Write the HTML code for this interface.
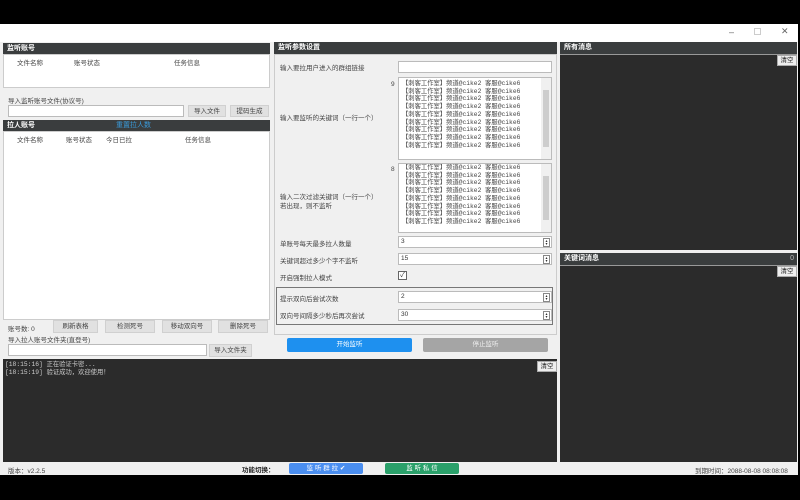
<!DOCTYPE html>
<html><head><meta charset="utf-8"><style>
*{margin:0;padding:0;box-sizing:border-box}
body{width:800px;height:500px;background:#000;position:relative;overflow:hidden;font-family:"Liberation Sans","Noto Sans CJK SC",sans-serif;font-size:7px;color:#333}
.a{position:absolute}
.hd{position:absolute;background:#3a3d3e;color:#fff;font-size:7px;line-height:11px;padding-left:4px;font-weight:bold}
.wh{position:absolute;background:#fff}
.inp{position:absolute;background:#fff;border:1px solid #bbb;font-size:6.5px;line-height:10px;padding-left:2px}
.btn{position:absolute;background:#e1e1e1;border:1px solid #d0d0d0;text-align:center;font-size:6.5px;line-height:11px;color:#444}
.dk{position:absolute;background:#2b2b2b}
.clr{position:absolute;background:#eee;border:1px solid #aaa;font-size:6.5px;line-height:9px;text-align:center;width:20px;height:11px;color:#222}
.ta{position:absolute;background:#fff;border:1px solid #bbb;font-size:6.3px;line-height:7.7px;padding:2px 0 0 3px;white-space:pre;color:#444;overflow:hidden;font-family:"Liberation Mono","Noto Sans CJK SC",monospace}
.sb{position:absolute;right:0;top:0;bottom:0;width:10px;background:#f0f0f0}
.sb i{position:absolute;left:2px;right:2px;top:12px;bottom:12px;background:#cdcdcd}
.spin{position:absolute;right:1px;top:1px;width:7px;height:9px;border:1px solid #888;font-size:4px;line-height:3px;text-align:center}
.lbl{position:absolute;font-size:6.5px;color:#444}
</style></head><body>
<div class="a" style="left:0;top:24px;width:798px;height:451px;background:#f0f0f0"></div>
<div class="a" style="left:0;top:24px;width:798px;height:18px;background:#fff"></div>
<div class="a" style="left:729px;top:27px;font-size:9px;color:#666">–</div>
<div class="a" style="left:754px;top:28px;width:7px;height:7px;border:1px solid #ccc"></div>
<div class="a" style="left:781px;top:26px;font-size:9px;color:#666">✕</div>

<!-- left -->
<div class="hd" style="left:3px;top:43px;width:267px;height:11px">监听账号</div>
<div class="wh" style="left:3px;top:54px;width:267px;height:34px;border:1px solid #ccc"></div>
<div class="lbl" style="left:17px;top:57px">文件名称</div>
<div class="lbl" style="left:74px;top:57px">账号状态</div>
<div class="lbl" style="left:174px;top:57px">任务信息</div>
<div class="lbl" style="left:8px;top:95px">导入监听账号文件(协议号)</div>
<div class="inp" style="left:8px;top:105px;width:176px;height:12px"></div>
<div class="btn" style="left:188px;top:105px;width:38px;height:12px">导入文件</div>
<div class="btn" style="left:230px;top:105px;width:39px;height:12px">提码生成</div>
<div class="hd" style="left:3px;top:120px;width:267px;height:11px">拉人账号<span style="position:absolute;left:113px;color:#3a9ad9;font-weight:normal">重置拉人数</span></div>
<div class="wh" style="left:3px;top:131px;width:267px;height:189px;border:1px solid #ccc"></div>
<div class="lbl" style="left:17px;top:134px">文件名称</div>
<div class="lbl" style="left:66px;top:134px">账号状态</div>
<div class="lbl" style="left:106px;top:134px">今日已拉</div>
<div class="lbl" style="left:185px;top:134px">任务信息</div>
<div class="lbl" style="left:8px;top:323px">账号数: 0</div>
<div class="btn" style="left:53px;top:320px;width:45px;height:13px">刷新表格</div>
<div class="btn" style="left:105px;top:320px;width:50px;height:13px">检测死号</div>
<div class="btn" style="left:162px;top:320px;width:50px;height:13px">移动双向号</div>
<div class="btn" style="left:218px;top:320px;width:50px;height:13px">删除死号</div>
<div class="lbl" style="left:8px;top:334px">导入拉人账号文件夹(直登号)</div>
<div class="inp" style="left:8px;top:344px;width:199px;height:12px"></div>
<div class="btn" style="left:209px;top:344px;width:43px;height:13px">导入文件夹</div>

<!-- middle -->
<div class="hd" style="left:274px;top:42px;width:283px;height:12px">监听参数设置</div>
<div class="a" style="left:274px;top:54px;width:283px;height:281px;border:1px solid #ccc"></div>
<div class="lbl" style="left:280px;top:62px">输入要拉用户进入的群组链接</div>
<div class="inp" style="left:398px;top:61px;width:154px;height:12px"></div>
<div class="lbl" style="left:391px;top:81px">9</div>
<div class="ta" style="left:398px;top:77px;width:154px;height:83px">【刺客工作室】频道@cike2 客服@cike6
【刺客工作室】频道@cike2 客服@cike6
【刺客工作室】频道@cike2 客服@cike6
【刺客工作室】频道@cike2 客服@cike6
【刺客工作室】频道@cike2 客服@cike6
【刺客工作室】频道@cike2 客服@cike6
【刺客工作室】频道@cike2 客服@cike6
【刺客工作室】频道@cike2 客服@cike6
【刺客工作室】频道@cike2 客服@cike6<div class="sb"><i></i></div></div>
<div class="lbl" style="left:280px;top:112px">输入要监听的关键词（一行一个）</div>
<div class="lbl" style="left:391px;top:166px">8</div>
<div class="ta" style="left:398px;top:163px;width:154px;height:70px;padding-top:0">【刺客工作室】频道@cike2 客服@cike6
【刺客工作室】频道@cike2 客服@cike6
【刺客工作室】频道@cike2 客服@cike6
【刺客工作室】频道@cike2 客服@cike6
【刺客工作室】频道@cike2 客服@cike6
【刺客工作室】频道@cike2 客服@cike6
【刺客工作室】频道@cike2 客服@cike6
【刺客工作室】频道@cike2 客服@cike6<div class="sb"><i></i></div></div>
<div class="lbl" style="left:280px;top:193px;line-height:9px">输入二次过滤关键词（一行一个）<br>若出现，则不监听</div>
<div class="lbl" style="left:280px;top:238px">单账号每天最多拉人数量</div>
<div class="inp" style="left:398px;top:236px;width:154px;height:12px">3<div class="spin">▴<br>▾</div></div>
<div class="lbl" style="left:280px;top:255px">关键词超过多少个字不监听</div>
<div class="inp" style="left:398px;top:253px;width:154px;height:12px">15<div class="spin">▴<br>▾</div></div>
<div class="lbl" style="left:280px;top:272px">开启强制拉人模式</div>
<div class="a" style="left:398px;top:271px;width:9px;height:9px;border:1px solid #666;background:#fff;font-size:7px;line-height:7px;text-align:center">✓</div>
<div class="a" style="left:276px;top:287px;width:277px;height:38px;border:1px solid #777"></div>
<div class="lbl" style="left:280px;top:293px">提示双向后尝试次数</div>
<div class="inp" style="left:398px;top:291px;width:154px;height:12px">2<div class="spin">▴<br>▾</div></div>
<div class="lbl" style="left:280px;top:310px">双向号间隔多少秒后再次尝试</div>
<div class="inp" style="left:398px;top:309px;width:154px;height:12px">30<div class="spin">▴<br>▾</div></div>
<div class="a" style="left:287px;top:338px;width:125px;height:14px;background:#1e90ef;border-radius:2px;color:#fff;text-align:center;line-height:14px;font-size:6.5px">开始监听</div>
<div class="a" style="left:423px;top:338px;width:125px;height:14px;background:#a5a5a5;border-radius:2px;color:#eee;text-align:center;line-height:14px;font-size:6.5px">停止监听</div>

<!-- log -->
<div class="dk" style="left:3px;top:359px;width:554px;height:103px"></div>
<div class="a" style="left:5px;top:361px;color:#ccc;font-size:6.3px;line-height:8px;font-family:'Liberation Mono','Noto Sans CJK SC',monospace">[18:15:16] 正在验证卡密...<br>[18:15:19] 验证成功，欢迎使用！</div>
<div class="clr" style="left:537px;top:361px">清空</div>

<!-- right -->
<div class="hd" style="left:560px;top:42px;width:237px;height:12px">所有消息</div>
<div class="dk" style="left:560px;top:54px;width:237px;height:196px;border-top:1px solid #999"></div>
<div class="clr" style="left:777px;top:55px">清空</div>
<div class="hd" style="left:560px;top:253px;width:237px;height:12px">关键词消息<span style="position:absolute;right:3px;font-weight:normal;color:#bbb">0</span></div>
<div class="dk" style="left:560px;top:265px;width:237px;height:197px;border-top:1px solid #999"></div>
<div class="clr" style="left:777px;top:266px">清空</div>

<!-- status -->
<div class="lbl" style="left:8px;top:465px">版本：v2.2.5</div>
<div class="lbl" style="left:242px;top:464px;font-weight:bold;color:#222">功能切换：</div>
<div class="a" style="left:289px;top:463px;width:74px;height:11px;background:#4a8ef0;border-radius:2px;color:#fff;text-align:center;line-height:11px;font-size:6.5px">监 听 群 拉 ✔</div>
<div class="a" style="left:385px;top:463px;width:74px;height:11px;background:#2aa06a;border-radius:2px;color:#fff;text-align:center;line-height:11px;font-size:6.5px">监 听 私 信</div>
<div class="lbl" style="left:695px;top:465px">到期时间：2088-08-08 08:08:08</div>
</body></html>
